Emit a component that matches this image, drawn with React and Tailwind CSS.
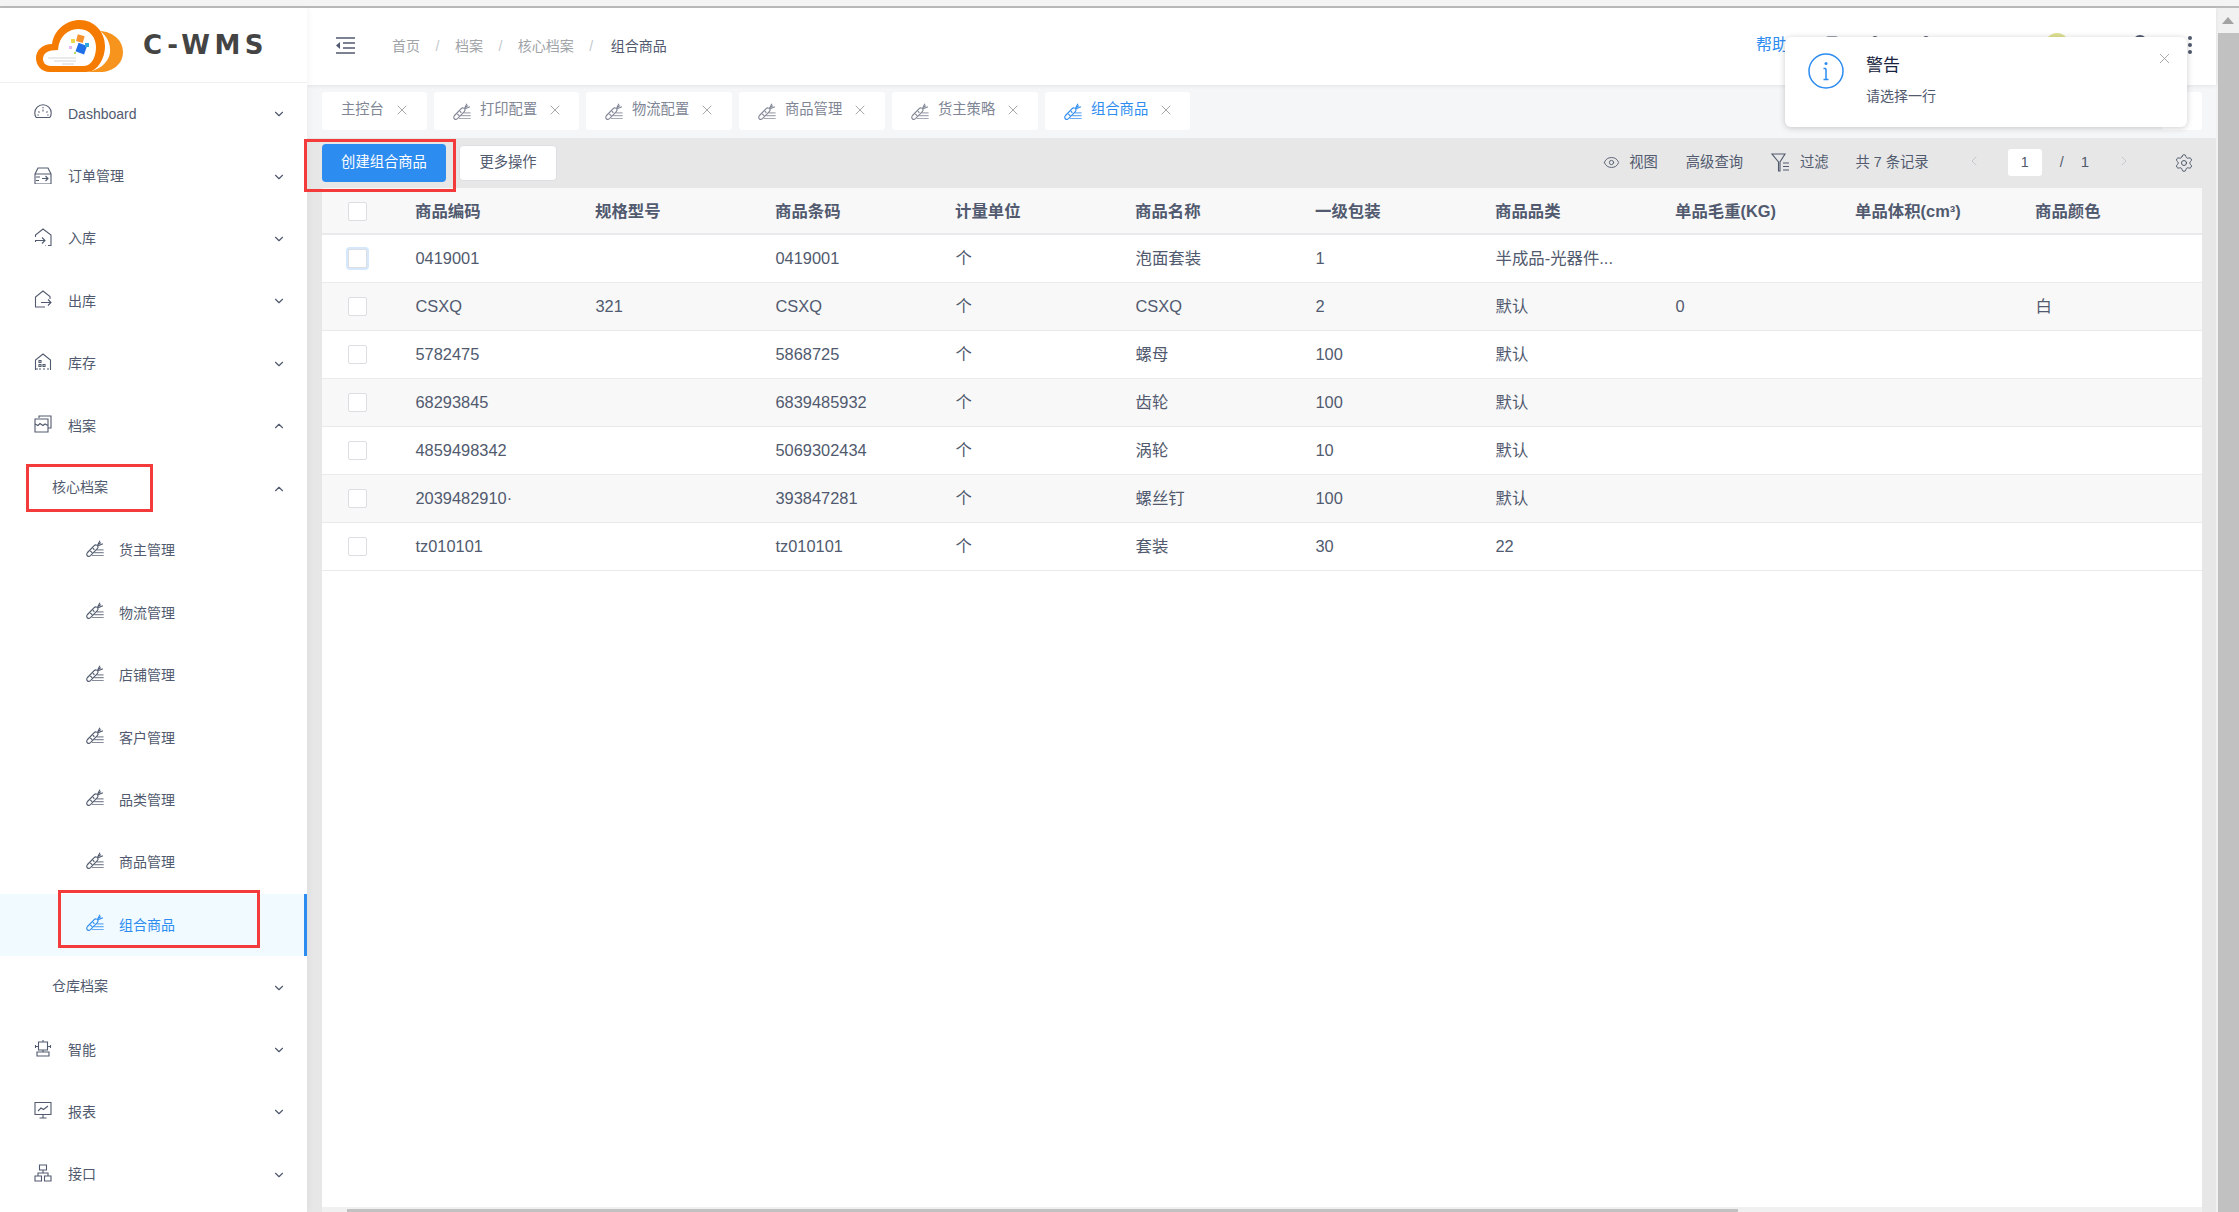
import { ChevronDown, ChevronUp, ChevronLeft, ChevronRight, X, Eye, Settings } from "lucide-react";

function Carrot({ className = "w-[19px] h-[19px]" }) {
  return (
    <svg viewBox="0 0 20 18" fill="none" stroke="currentColor" strokeWidth="1.200" className={className}>
      <path d="M1.6 16.9c-1.2-1-1-2.5 0-3.7l7-7.2c1.3-1.3 3.2-.8 3.9.6.4 1 .2 1.7-.6 2.5l-6.9 7.1c-1 .9-2.4 1.5-3.4.7z" />
      <path d="M4.5 11.5l2.2 2.2M7.2 8.7l1.6 1.6M12.2 5.6L14.6.8M12.8 6.2l5-2.2M13 4.6l2.8-1.8" />
      <path d="M11 10.5h7.5M8.6 13.3h10M6.2 16.4h12.4" opacity="0.7" />
    </svg>
  );
}

function MenuIcon({ name }) {
  const paths = {
    dashboard: (
      <>
        <path d="M2.2 14.5C1 13.2.8 11.6.8 10a8.2 8.2 0 0 1 16.4 0c0 1.6-.2 3.2-1.4 4.5z" />
        <path d="M9 6.5v2M4.5 8.5l1 1M13.5 8.5l-1 1M3.4 12h1.4M13.2 12h1.4M9 5.2V4" />
      </>
    ),
    order: (
      <>
        <path d="M1 8l3-6h10l3 6v10H1z" />
        <path d="M1 8h16M2 11h4M2 14.5h3M8 12.5h6M11.5 10l2.5 2.5-2.5 2.5" />
      </>
    ),
    inbound: (
      <>
        <path d="M1.5 9V7l7.5-6 8 6v10.5h-3M1.5 13v1" />
        <path d="M1 12.5h10M8 9.5l3 3-3 3M11 17.5h.5" />
      </>
    ),
    outbound: (
      <>
        <path d="M11 17H1.5V7L9 1l7 5.5V9" />
        <path d="M7 12.5h10M14 9.5l3 3-3 3" />
      </>
    ),
    stock: (
      <>
        <path d="M1.5 17V7L9 1l7.500 6v10" />
        <path d="M5 7.500h2v2H5zM5 11.500h2v2H5zM9 11.500h2v2H9zM2 16h2M5 16h2M9 16h2M13 16h2" />
      </>
    ),
    archive: (
      <>
        <path d="M5 3V1h12v12h-3" />
        <path d="M1 4h13v13H1z" />
        <path d="M1 9l3 1.500 2-2 3 2 2-1.500 3 1.500" />
      </>
    ),
    robot: (
      <>
        <path d="M4.500 3h9v8h-9zM1.500 6v3M16.500 6v3M1.500 7.500h3M13.500 7.500h3M9 1v2M7 6.500v.1M11 6.500v.1M9 11v2M3 13h12v4H3z" />
      </>
    ),
    report: (
      <>
        <path d="M1 1.500h16v12H1zM9 13.500V17M5.500 17h7" />
        <path d="M4 10l3-3 2.500 1.500L14 5" />
      </>
    ),
    api: (
      <>
        <path d="M5.500 1h7v5h-7zM1 12h6.500v5H1zM10.500 12H17v5h-6.500zM9 6v3M4 12V9h10v3" />
      </>
    ),
  };
  return (
    <svg viewBox="0 0 18 18" fill="none" stroke="currentColor" strokeWidth="1.100" className="w-[18px] h-[18px] shrink-0 -mt-[4px]">
      {paths[name]}
    </svg>
  );
}

function Logo() {
  return (
    <svg viewBox="0 0 88 52" className="w-[88px] h-[52px]">
      <path d="M64 11c14 1 23 10 23 21 0 12-10 20-23 20H52c10-2 20-8 22-19 1-9-3-17-10-22z" fill="#f7941d" />
      <path d="M14 52C5 52 0 45 0 38c0-8 7-14 16-14C18 10 30 0 44 0c14 0 25 12 25 26 0 12-7 26-19 26z" fill="#f57c00" />
      <path d="M15 46c-6 0-8-4-8-7 0-6 5-9 15-9 1-14 10-21 21-21 11 0 17 9 17 18 0 9-4 19-12 19z" fill="#ffffff" />
      <path d="M12 38h28M18 41h22M26 44h12" stroke="#e4e4e4" strokeWidth="1.500" />
      <rect x="41" y="24" width="9" height="9" fill="#1e6fe8" transform="rotate(20 45 28)" />
      <rect x="41" y="15" width="7" height="7" fill="#f59331" transform="rotate(15 44 18)" />
      <rect x="49" y="23" width="4" height="4" fill="#2fa8e0" />
      <rect x="35" y="19" width="4" height="4" fill="#e8d84a" />
      <rect x="33" y="26" width="3" height="3" fill="#e2b8ee" />
      <rect x="38" y="32" width="2" height="2" fill="#b7d65a" />
    </svg>
  );
}

const menuTop = [
  { label: "Dashboard", icon: "dashboard" },
  { label: "订单管理", icon: "order" },
  { label: "入库", icon: "inbound" },
  { label: "出库", icon: "outbound" },
  { label: "库存", icon: "stock" },
  { label: "档案", icon: "archive", open: true },
];
const subItems = ["货主管理", "物流管理", "店铺管理", "客户管理", "品类管理", "商品管理"];
const menuBottom = [
  { label: "智能", icon: "robot" },
  { label: "报表", icon: "report" },
  { label: "接口", icon: "api" },
];

function MenuRow({ label, icon, open }) {
  const Chevron = open ? ChevronUp : ChevronDown;
  return (
    <div className="h-[62.4px] flex items-center pl-[34px] pr-[21px] text-[14px] text-[#515a6e]">
      {icon ? <MenuIcon name={icon} /> : null}
      <span className={icon ? "ml-[16px]" : "ml-[18px] -mt-[3px]"}>{label}</span>
      <Chevron className="ml-auto w-[14px] h-[14px]" strokeWidth={2} />
    </div>
  );
}

function Sidebar() {
  return (
    <aside className="w-[307px] shrink-0 bg-white flex flex-col overflow-hidden z-10 shadow-[2px_0_6px_rgba(0,0,0,0.04)]">
      <div className="h-[75px] shrink-0 border-b border-[#f0f0f0] flex items-start pl-[36px] pt-[12px]">
        <Logo />
        <span className="ml-[19px] mt-[10px] text-[26px] leading-[30px] font-bold tracking-[4.500px] text-[#444444] font-['DejaVu_Sans',sans-serif]">C-WMS</span>
      </div>
      {menuTop.map((m) => (
        <MenuRow key={m.label} {...m} />
      ))}
      <MenuRow label="核心档案" open />
      {subItems.map((s) => (
        <div key={s} className="h-[62.4px] flex items-center pl-[86px] text-[14px] text-[#515a6e]">
          <Carrot className="w-[19px] h-[19px] -mt-[5px]" />
          <span className="ml-[14px]">{s}</span>
        </div>
      ))}
      <div className="h-[62.4px] flex items-center pl-[86px] text-[14px] text-[#2d8cf0] bg-[#f0faff] border-r-[3px] border-[#2d8cf0]">
        <Carrot className="w-[19px] h-[19px] -mt-[5px]" />
        <span className="ml-[14px]">组合商品</span>
      </div>
      <MenuRow label="仓库档案" />
      {menuBottom.map((m) => (
        <MenuRow key={m.label} {...m} />
      ))}
    </aside>
  );
}

function Header() {
  const crumbs = ["首页", "档案", "核心档案"];
  return (
    <header className="h-[77px] shrink-0 bg-white flex items-center pl-[29px] pr-[24px] shadow-[0_1px_4px_rgba(0,21,41,0.08)] z-[1]">
      <svg viewBox="0 0 19 17" className="w-[19px] h-[17px] -mt-[3px]" fill="none" stroke="#515a6e" strokeWidth="1.500">
        <path d="M0 1h19M7 6h12M7 11h12M0 16h19" />
        <path d="M4 5v7L0 8.500z" fill="#515a6e" stroke="none" />
      </svg>
      <nav className="ml-[37px] -mt-[1px] flex items-center text-[14px] text-[#a0a3a8]">
        {crumbs.map((c) => (
          <span key={c} className="flex items-center">
            {c}
            <span className="mx-[15.500px] text-[#c5c8ce]">/</span>
          </span>
        ))}
        <span className="ml-[2px] text-[#515a6e]">组合商品</span>
      </nav>
      <div className="ml-auto -mt-[3px] flex items-center">
        <span className="text-[16px] text-[#2d8cf0]">帮助</span>
        <span className="ml-[38px] w-[12px] h-[18px] border border-[#9aa0aa] rounded-[2px]" />
        <span className="ml-[34px] w-[6px] h-[18px] bg-[#515a6e] rounded-full" />
        <span className="ml-[45px] w-[6px] h-[18px] bg-[#515a6e] rounded-full" />
        <span className="ml-[116px] w-[24px] h-[24px] bg-[#dfe192] rounded-full" />
        <span className="ml-[64px] w-[14px] h-[20px] bg-[#515a6e] rounded-full" />
        <span className="ml-[41px] flex flex-col gap-[3px]">
          <span className="w-[4px] h-[4px] bg-[#515a6e] rounded-full" />
          <span className="w-[4px] h-[4px] bg-[#515a6e] rounded-full" />
          <span className="w-[4px] h-[4px] bg-[#515a6e] rounded-full" />
        </span>
      </div>
    </header>
  );
}

function Tab({ label, icon = true, active, width }) {
  return (
    <div className={`${width} h-[38px] shrink-0 bg-white rounded-[3px] flex items-center pl-[19px] text-[14.300px] ${active ? "text-[#2d8cf0]" : "text-[#808695]"}`}>
      {icon ? <Carrot className="w-[19px] h-[19px] mr-[8px]" /> : null}
      <span className="-mt-[2px]">{label}</span>
      <X className="ml-[10px] w-[16px] h-[16px] text-[#999999] -mt-[3px]" strokeWidth={1.300} />
    </div>
  );
}

function TabBar() {
  return (
    <div className="h-[53px] shrink-0 bg-[#f5f6f8] flex items-start pt-[7px] pl-[15px] pr-[14px] gap-[7px]">
      <Tab label="主控台" icon={false} width="w-[105px]" />
      <Tab label="打印配置" width="w-[145px]" />
      <Tab label="物流配置" width="w-[146px]" />
      <Tab label="商品管理" width="w-[146px]" />
      <Tab label="货主策略" width="w-[146px]" />
      <Tab label="组合商品" active width="w-[145px]" />
      <div className="ml-auto w-[40px] h-[38px] bg-white rounded-[3px] flex justify-end pr-[14px] pt-[13px] text-[#2d8cf0] text-[14px] leading-none">
        ·
      </div>
    </div>
  );
}

function Toolbar() {
  return (
    <div className="h-[50px] shrink-0 flex items-center pr-[8px] text-[14.300px] text-[#515a6e]">
      <button className="w-[124px] h-[38px] pb-[1px] bg-[#2d8cf0] text-white rounded-[4px] text-[14.300px]">创建组合商品</button>
      <button className="ml-[13px] w-[98px] h-[36px] pb-[1px] bg-white border border-[#dcdee2] rounded-[4px] text-[14.300px] text-[#515a6e]">更多操作</button>
      <div className="ml-auto -mt-[1px] flex items-center">
        <Eye className="w-[17px] h-[17px]" strokeWidth={1.300} />
        <span className="ml-[9px]">视图</span>
        <span className="ml-[28px]">高级查询</span>
        <svg viewBox="0 0 19 19" className="ml-[28.500px] w-[19px] h-[19px]" fill="none" stroke="#515a6e" strokeWidth="1.100">
          <path d="M1 1h13L9 9v9H7.500V9z" />
          <path d="M12 10h6M12 13.500h6M12 17h6" />
        </svg>
        <span className="ml-[9.500px]">过滤</span>
        <span className="ml-[27px]">共 7 条记录</span>
        <ChevronLeft className="ml-[37px] w-[16px] h-[16px] text-[#c5c8ce] -mt-[3px]" strokeWidth={1.500} />
        <span className="ml-[26px] w-[34px] h-[27px] bg-white rounded-[3px] flex items-center justify-center">1</span>
        <span className="ml-[18px]">/</span>
        <span className="ml-[17px] text-[15px] -mt-[1px]">1</span>
        <ChevronRight className="ml-[27px] w-[16px] h-[16px] text-[#c5c8ce] -mt-[3px]" strokeWidth={1.500} />
        <Settings className="ml-[42px] w-[20px] h-[20px]" strokeWidth={1.200} />
      </div>
    </div>
  );
}

const columns = ["商品编码", "规格型号", "商品条码", "计量单位", "商品名称", "一级包装", "商品品类", "单品毛重(KG)", "单品体积(cm³)", "商品颜色"];
const rows = [
  ["0419001", "", "0419001", "个", "泡面套装", "1", "半成品-光器件...", "", "", ""],
  ["CSXQ", "321", "CSXQ", "个", "CSXQ", "2", "默认", "0", "", "白"],
  ["5782475", "", "5868725", "个", "螺母", "100", "默认", "", "", ""],
  ["68293845", "", "6839485932", "个", "齿轮", "100", "默认", "", "", ""],
  ["4859498342", "", "5069302434", "个", "涡轮", "10", "默认", "", "", ""],
  ["2039482910·", "", "393847281", "个", "螺丝钉", "100", "默认", "", "", ""],
  ["tz010101", "", "tz010101", "个", "套装", "30", "22", "", "", ""],
];

function Check({ focused }) {
  return (
    <span className={`block w-[19px] h-[19px] bg-white border border-[#dcdee2] rounded-[2px] ${focused ? "border-[#b9d8f8] shadow-[0_0_0_2px_rgba(45,140,240,0.2)]" : ""}`} />
  );
}

function GoodsTable() {
  return (
    <div className="flex-1 min-h-0 bg-white overflow-hidden text-[16.400px] text-[#515a6e]">
      <div className="h-[47px] pt-[2px] grid grid-cols-[75px_repeat(10,180px)] items-center bg-[#f8f8f9] border-b-[2px] border-[#e8eaec] font-bold">
        <div className="pl-[26px]">
          <Check />
        </div>
        {columns.map((c) => (
          <div key={c} className="pl-[18px] whitespace-nowrap">{c}</div>
        ))}
      </div>
      {rows.map((r, i) => (
        <div key={r[0]} className={`h-[48px] grid grid-cols-[75px_repeat(10,180px)] items-center border-b border-[#e8eaec] ${i % 2 ? "bg-[#f8f8f9]" : "bg-white"}`}>
          <div className="pl-[26px]">
            <Check focused={i === 0} />
          </div>
          {r.map((cell, j) => (
            <div key={j} className="pl-[18.500px] whitespace-nowrap">{cell}</div>
          ))}
        </div>
      ))}
    </div>
  );
}

function Notice() {
  return (
    <div className="absolute left-[1785px] top-[37px] w-[402px] h-[90px] bg-white rounded-[6px] shadow-[0_1px_6px_rgba(0,0,0,0.2)] z-20 flex">
      <svg viewBox="0 0 36 36" className="ml-[23px] mt-[16px] w-[36px] h-[36px]" fill="none" stroke="#2d8cf0" strokeWidth="1.500">
        <circle cx="18" cy="18" r="17" />
        <path d="M18 15.500v11M15.500 15.500H18M15.500 26.500h5" />
        <circle cx="18" cy="10.500" r="1.500" fill="#2d8cf0" stroke="none" />
      </svg>
      <div className="ml-[22px]">
        <div className="mt-[17px] text-[17px] leading-[24px] text-[#17233d]">警告</div>
        <div className="mt-[8px] text-[14px] leading-[20px] text-[#515a6e]">请选择一行</div>
      </div>
      <X className="absolute right-[14px] top-[13px] w-[17px] h-[17px] text-[#999999]" strokeWidth={1.200} />
    </div>
  );
}

function Annotations() {
  return (
    <>
      <div className="absolute left-[304px] top-[139px] w-[152px] h-[53px] border-[3px] border-[#f33b3b] z-20" />
      <div className="absolute left-[26px] top-[464px] w-[127px] h-[48px] border-[3px] border-[#f33b3b] z-20" />
      <div className="absolute left-[58px] top-[890px] w-[202px] h-[58px] border-[3px] border-[#f33b3b] z-20" />
    </>
  );
}

export default function App() {
  return (
    <div className="relative w-[2239px] h-[1212px] overflow-hidden flex flex-col bg-[#e6e6e6] font-['Liberation_Sans','Noto_Sans_CJK_SC',sans-serif]">
      <div className="h-[8px] shrink-0 bg-[#f4f4f4] border-b-[2px] border-[#bbbbbb]" />
      <div className="flex-1 min-h-0 flex">
        <Sidebar />
        <main className="flex-1 min-w-0 flex flex-col">
          <Header />
          <TabBar />
          <div className="flex-1 min-h-0 flex flex-col pl-[15px] pr-[14px] bg-[#e7e7e7]">
            <Toolbar />
            <GoodsTable />
            <div className="h-[5px] shrink-0 bg-[#f0f0f0] pl-[25px] flex items-end">
              <div className="w-[1391px] h-[3px] bg-[#c1c1c1]" />
            </div>
          </div>
        </main>
        <div className="w-[23px] shrink-0 bg-[#f1f1f1] flex flex-col">
          <div className="h-[25px] shrink-0 flex items-center justify-center">
            <span className="w-0 h-0 border-x-[6px] border-x-transparent border-b-[7px] border-b-[#a3a3a3]" />
          </div>
          <div className="flex-1 ml-[2px] bg-[#c1c1c1]" />
        </div>
      </div>
      <Notice />
      <Annotations />
    </div>
  );
}
